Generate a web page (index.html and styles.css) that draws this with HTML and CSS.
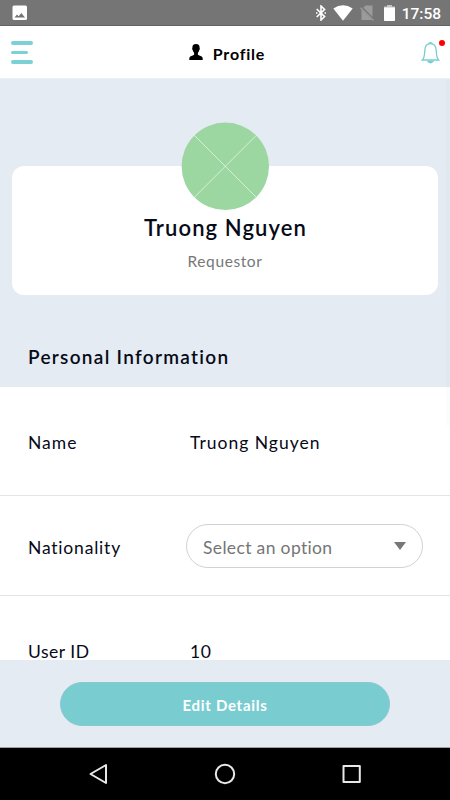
FILE: index.html
```html
<!DOCTYPE html>
<html lang="en">
  <head>
    <title>Profile</title>
    <meta charset="utf-8"/>
    <meta name="viewport" content="width=device-width, initial-scale=1"/>
    <link rel="stylesheet" href="styles.css">
  </head>
  <body>
    <div id="status">
      <svg class="picture" width="16" height="16" viewBox="0 0 16 16">
        <rect x="0.5" y="0.5" width="14.5" height="14.5" rx="1.5" fill="#fff"/>
        <path d="M2.5 12.5L5 9.5L6.7 11.3L9.3 8L13 12.5Z" fill="#757575"/>
      </svg>
      <svg class="bluetooth" width="10" height="16" viewBox="0 0 10 16" fill="none" stroke="#fff" stroke-width="1.6">
        <path d="M0.7 4L8.6 11.6L5 15V1L8.6 4.4L0.7 12"/>
        <path d="M0 8h1.5M8.5 8H10"/>
      </svg>
      <svg class="wifi" width="20" height="16" viewBox="0 0 20 16">
        <path d="M0.3 3.5Q10-3 19.7 3.5L10 15.8Z" fill="#fff"/>
      </svg>
      <svg class="nosim" width="15" height="16" viewBox="0 0 15 16">
        <path d="M5.5 0.5H12.5V15H1.5V4.5Z" fill="#9b9b9b"/>
        <path d="M0 1.2L14 15.2" stroke="#757575" stroke-width="2.6"/>
        <path d="M0.5 2.8L13.5 15.5" stroke="#9b9b9b" stroke-width="1.3"/>
      </svg>
      <svg class="battery" width="11" height="16" viewBox="0 0 11 16">
        <path d="M0 1.5H3V0H8V1.5H11V3H0Z" fill="#c4c4c4"/>
        <rect y="2.6" width="11" height="13.4" rx="0.8" fill="#fff"/>
      </svg>
      <span class="clock">17:58</span>
    </div>

    <header>
      <div class="menu"><i></i><i></i><i></i></div>
      <div class="title">
        <svg width="14" height="16" viewBox="0 0 14 16">
          <path d="M7 0C9.6 0 10.8 1.5 10.6 4C11 4.2 10.8 5.8 10.2 6.2C10 7.4 9.5 8.2 8.9 8.8V10.7C10.5 11.8 13.3 12 13.7 14V16H0.3V14C0.7 12 3.5 11.8 5.1 10.7V8.8C4.5 8.2 4 7.4 3.8 6.2C3.2 5.8 3 4.2 3.4 4C3.2 1.5 4.4 0 7 0Z"/>
        </svg>
        <h1>Profile</h1>
      </div>
      <div class="bell">
        <svg width="20" height="24" viewBox="0 0 20 24" fill="none" stroke="#79cdd1" stroke-width="1.3">
          <path d="M1.4 19C3.5 17 3.6 14 3.8 9.5C4 5.5 6.2 2.7 9.5 2.7S15 5.5 15.2 9.5C15.4 14 15.5 17 17.6 19Z"/>
          <path d="M7.5 2.5Q9.5 0.8 11.5 2.5"/>
          <path d="M7.2 20.5Q9.5 23 11.8 20.5Z" fill="#79cdd1"/>
        </svg>
        <b class="dot"></b>
      </div>
    </header>

    <main>
      <section class="hero">
        <div class="card">
          <svg class="avatar" width="88" height="88" viewBox="0 0 88 88">
            <circle cx="44.3" cy="44.3" r="43.7" fill="#9cd6a1"/>
            <path d="M13.3 13.3L75.3 75.3M75.3 13.3L13.3 75.3" stroke="#e6f6e7" stroke-width="0.8"/>
          </svg>
          <h2>Truong Nguyen</h2>
          <p>Requestor</p>
        </div>
        <h3>Personal Information</h3>
      </section>

      <div class="row name">
        <label>Name</label>
        <div class="value">Truong Nguyen</div>
      </div>
      <div class="row nationality">
        <label>Nationality</label>
        <div class="select">
          <span>Select an option</span>
          <i class="arrow"></i>
        </div>
      </div>
      <div class="row user">
        <label>User ID</label>
        <div class="value">10</div>
      </div>
      <div class="scrollbar"></div>
    </main>

    <footer>
      <button>Edit Details</button>
    </footer>

    <nav>
      <svg width="20" height="22" viewBox="0 0 20 22"><path d="M2.5 11L18 2V20Z"/></svg>
      <svg width="22" height="22" viewBox="0 0 22 22"><circle cx="11" cy="11" r="9.2"/></svg>
      <svg width="20" height="20" viewBox="0 0 20 20"><rect x="1.5" y="2" width="16.3" height="16"/></svg>
    </nav>
  </body>
</html>
```
FILE: styles.css
```css
* {box-sizing: border-box;}
html {height: 100%;}
body {
  display: grid;
  grid-template-rows: 26px 53px 1fr 88px 52px;
  height: 100%;
  margin: 0;
  overflow: hidden;
  font-family: Lato, sans-serif;
  color: #070a17;
  background: #fff;
}
svg {display: block; flex: none;}
h1, h2, h3, p {margin: 0;}

#status {
  display: flex;
  align-items: center;
  padding: 1px 9px 0 12px;
  background: #757575;
  border-bottom: 1px solid #636363;
  color: #fff;
}
#status .bluetooth {margin-left: auto;}
#status .wifi {margin-left: 7px;}
#status .nosim {margin-left: 7px;}
#status .battery {margin-left: 9px;}
#status .clock {
  margin-left: 7px;
  font: 500 15.5px/24px Roboto, sans-serif;
  padding-top: 2px;
}

header {
  display: grid;
  grid-template-columns: 100px 1fr 100px;
  align-items: center;
  border-bottom: 1px solid #edf1f4;
}
.menu {
  display: flex;
  flex-direction: column;
  gap: 6px;
  padding: 1px 0 0 11px;
}
.menu i {
  width: 22px;
  height: 3.5px;
  border-radius: 2px;
  background: #7bd1d5;
}
.menu i:nth-child(2) {width: 16.5px;}
.title {
  display: flex;
  align-items: center;
  justify-content: center;
  gap: 10px;
  padding: 3px 0 0 4px;
}
.title h1 {
  font-size: 16px;
  line-height: 22px;
  letter-spacing: 0.8px;
  color: #000;
}
.title svg {margin-bottom: 3px;}
.bell {
  position: relative;
  justify-self: end;
  margin: 1px 9px 0 0;
}
.dot {
  position: absolute;
  top: -1px;
  right: -4px;
  width: 6.5px;
  height: 6.5px;
  border-radius: 50%;
  background: #f00;
}

main {
  position: relative;
  overflow: hidden;
}
.hero {
  height: 308px;
  padding: 87px 12px 0;
  background: #e4ebf2;
}
.card {
  height: 129px;
  border-radius: 12px;
  background: #fff;
  text-align: center;
}
.avatar {
  position: relative;
  top: -44px;
  margin: 0 auto -44px;
}
h2 {
  font-size: 22px;
  font-weight: 600;
  line-height: 30px;
  letter-spacing: 1.1px;
  padding: 3px 0 0 1px;
}
.card p {
  margin-top: 3px;
  font-size: 15.5px;
  line-height: 30px;
  letter-spacing: 0.6px;
  color: #777;
}
h3 {
  padding: 49px 16px 0;
  font-size: 19px;
  font-weight: 600;
  line-height: 26px;
  letter-spacing: 1.3px;
}

.row {
  display: grid;
  grid-template-columns: 162px 1fr;
  align-items: center;
  padding-left: 28px;
  font-size: 17.5px;
  letter-spacing: 0.8px;
  border-bottom: 1px solid #e3e4e5;
}
.name {
  height: 109px;
  padding-top: 2px;
  letter-spacing: 1px;
}
.nationality {height: 100px;}
.nationality label {padding-top: 3px;}
.user {
  height: 110px;
  padding-top: 2px;
  letter-spacing: 0.5px;
}
.select {
  display: flex;
  align-items: center;
  justify-content: space-between;
  width: 237px;
  height: 44px;
  margin-left: -4px;
  padding: 4px 16px 0;
  border: 1px solid #d2d2d2;
  border-radius: 22px;
  letter-spacing: 0.35px;
  color: #757575;
}
.arrow {
  border: 6.5px solid transparent;
  border-top: 8px solid #777;
  border-bottom: 0;
  margin-bottom: 3px;
}
.scrollbar {
  position: absolute;
  top: 0;
  right: 0;
  width: 4px;
  height: 347px;
  background: rgba(0,0,0,0.01);
}

footer {
  display: flex;
  justify-content: center;
  padding-top: 22px;
  background: #e4ebf2;
  border-bottom: 1px solid #9ca1a5;
}
footer button {
  width: 330px;
  height: 44px;
  padding: 1px 0 0;
  border: 1px solid #8bc8cd;
  border-radius: 22px;
  background: #79cdd1;
  color: #fff;
  font: bold 15px Lato, sans-serif;
  letter-spacing: 0.7px;
}

nav {
  display: flex;
  align-items: center;
  justify-content: space-between;
  padding: 0 88px;
  background: #000;
}
nav svg {
  fill: none;
  stroke: #e8e8e8;
  stroke-width: 2;
  stroke-linejoin: round;
}
```
